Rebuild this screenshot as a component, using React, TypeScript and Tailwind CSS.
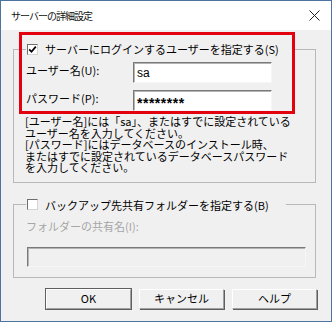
import React from 'react'

const jp = "font-['Noto_Sans_CJK_JP',sans-serif]"
const sunken =
  'border border-t-[#7a7a7a] border-l-[#7a7a7a] border-b-[#f6f6f6] border-r-[#f6f6f6] shadow-[inset_1px_1px_0_#b4b4b4]'

const CheckBox = ({ checked }: { checked?: boolean }) => (
  <span className="w-[11px] h-[11px] bg-white border border-t-[#6e6e6e] border-l-[#6e6e6e] border-b-[#d4d4d4] border-r-[#d4d4d4] flex items-center justify-center shrink-0">
    {checked && (
      <svg width="9" height="9" viewBox="0 0 9 9">
        <path d="M1.2 4.4 L3.5 6.8 L7.8 1.6" fill="none" stroke="#000" strokeWidth="1.7" />
      </svg>
    )}
  </span>
)

const Button = ({ label, primary }: { label: string; primary?: boolean }) => (
  <button
    type="button"
    className={`w-[85px] h-[20px] bg-[#f0f0f0] border border-t-white border-l-white border-b-[#a0a0a0] border-r-[#a0a0a0] shadow-[1px_1px_0_#5f5f5f] text-[11px] leading-none text-black ${jp} ${
      primary ? 'outline outline-1 outline-[#606060]' : ''
    }`}
  >
    {label}
  </button>
)

const App = () => {
  return (
    <div className="relative w-[332px] h-[322px] border border-[#4d74a0] flex flex-col bg-[#f0f0f0] text-black overflow-hidden">
      {/* title bar */}
      <div className="h-[29px] bg-white flex items-center justify-between pl-[10px] pr-[11px] shrink-0">
        <span className={`text-[10px] tracking-[-1px] leading-none text-[#111] ${jp}`}>サーバーの詳細設定</span>
        <svg width="11" height="11" viewBox="0 0 11 11">
          <path d="M0.5 0.5 L10.5 10.5 M10.5 0.5 L0.5 10.5" stroke="#222" strokeWidth="1" />
        </svg>
      </div>

      <div className={`flex-1 flex flex-col px-[12px] ${jp} text-[11px]`}>
        {/* group 1 */}
        <fieldset className="mt-[12px] w-[303px] border border-[#b8b8b8] pl-[12px] pr-[8px] pb-[8px]">
          <legend className="flex items-center gap-[7px] pl-[1px] pr-[16px] h-[14px] leading-[14px]">
            <CheckBox checked />
            <span>サーバーにログインするユーザーを指定する(S)</span>
          </legend>
          <div className="pt-[6px] flex flex-col gap-[7px]">
            <div className="flex items-start h-[21px]">
              <span className="w-[107px] leading-[14px] mt-[1px]">ユーザー名(U):</span>
              <div className={`w-[139px] h-[21px] bg-white ${sunken} flex items-center pl-[3px] font-['Liberation_Sans',sans-serif] text-[12px]`}>
                sa
              </div>
            </div>
            <div className="flex items-start h-[21px]">
              <span className="w-[107px] leading-[14px] mt-[1px]">パスワード(P):</span>
              <div className={`w-[139px] h-[21px] bg-white ${sunken} flex items-center pl-[3px] pt-[5px] font-['Liberation_Sans',sans-serif] text-[14px] leading-none font-bold tracking-[0.5px]`}>
                ********
              </div>
            </div>
          </div>
          <div className="mt-[5px] leading-[11.5px] -ml-[1px]">
            <div>[ユーザー名]には「sa」、またはすでに設定されている</div>
            <div>ユーザー名を入力してください。</div>
            <div>[パスワード]にはデータベースのインストール時、</div>
            <div>またはすでに設定されているデータベースパスワード</div>
            <div>を入力してください。</div>
          </div>
        </fieldset>

        {/* group 2 */}
        <fieldset className="mt-[15px] w-[303px] border border-[#b8b8b8] pl-[12px] pr-[8px] pb-[10px]">
          <legend className="flex items-center gap-[7px] pl-[1px] pr-[17px] h-[14px] leading-[14px]">
            <CheckBox />
            <span>バックアップ先共有フォルダーを指定する(B)</span>
          </legend>
          <div className="mt-[7px] leading-[14px] text-[#a6a6a6]">フォルダーの共有名(I):</div>
          <div className={`mt-[14px] ml-[1px] w-[279px] h-[20px] bg-[#f0f0f0] ${sunken}`} />
        </fieldset>

        {/* buttons */}
        <div className="mt-[11px] flex justify-end gap-[8px] pr-[2px]">
          <Button label="OK" primary />
          <Button label="キャンセル" />
          <Button label="ヘルプ" />
        </div>
      </div>

      {/* red annotation frame */}
      <div className="absolute left-[18px] top-[31px] w-[276px] h-[82px] border-[3px] border-[#e3000f] pointer-events-none" />
    </div>
  )
}

export default App
